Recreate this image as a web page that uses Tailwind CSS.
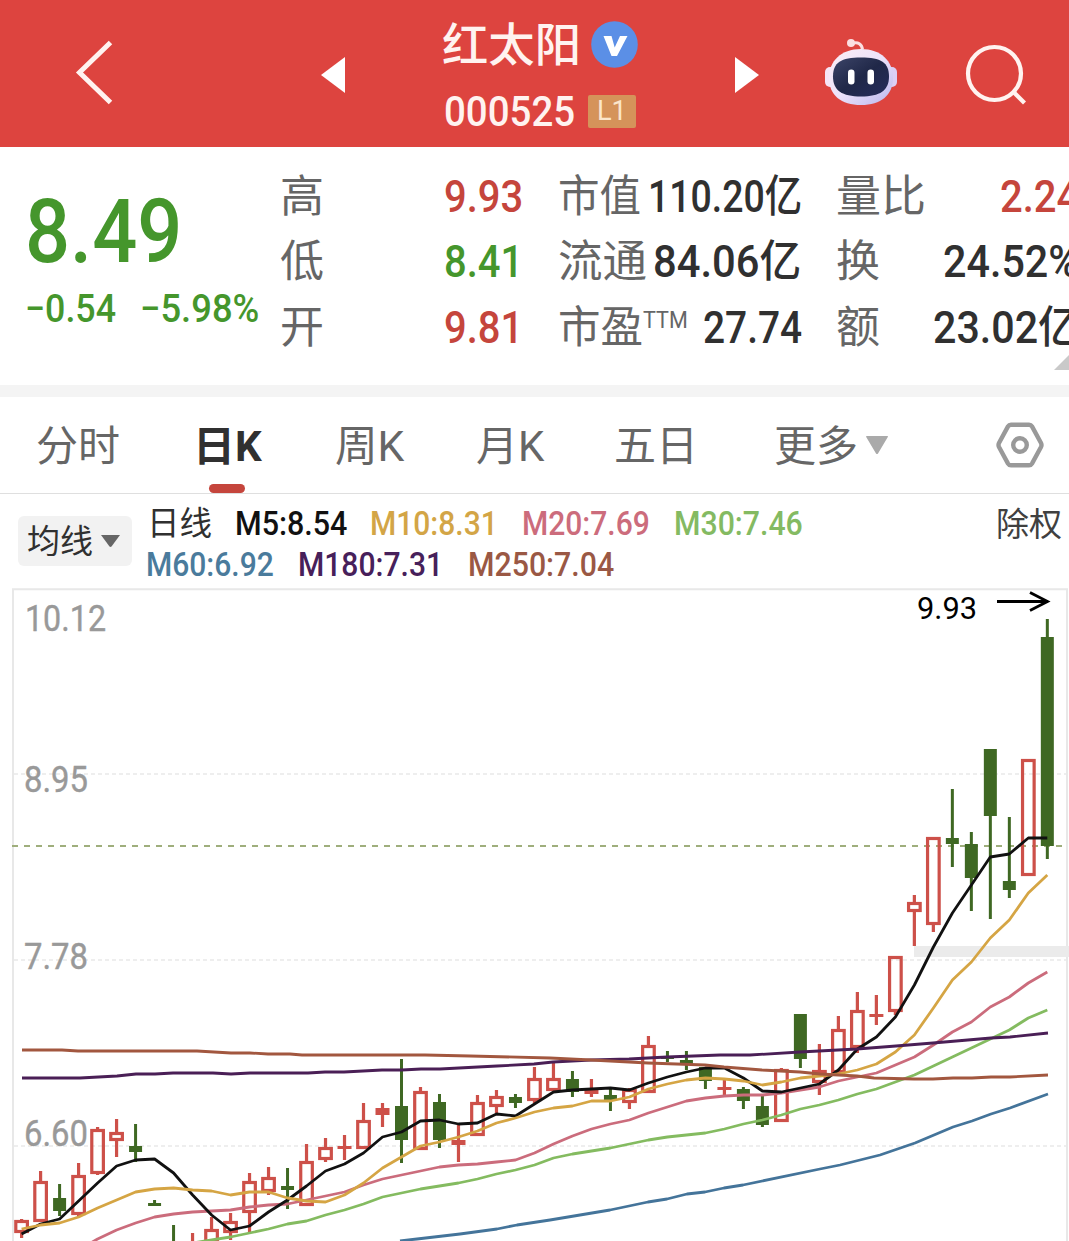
<!DOCTYPE html>
<html lang="zh-CN">
<head>
<meta charset="utf-8">
<title>红太阳 000525</title>
<script src="https://cdn.jsdelivr.net/npm/@tailwindcss/browser@4"></script>
</head>
<body class="w-[1069px] h-[1241px] overflow-hidden bg-white font-['Roboto','Noto_Sans_CJK_SC',sans-serif] text-[#303030] leading-none whitespace-nowrap [&_.fit]:block [&_.fit]:shrink-0 [&_.fit>span]:inline-block [&_.fit>span]:origin-left">

<header class="h-[147px] bg-[#dd443f] flex items-start text-white">
  <svg class="w-[321px] h-[147px] shrink-0" viewBox="0 0 321 147" fill="none" stroke="#fff3f0" stroke-width="5"><path d="M110.500 42.500 79.500 72.500 110.500 102.500"/></svg>
  <svg class="w-[24px] h-[36px] mt-[57px] shrink-0" viewBox="0 0 24 36"><path d="M24 0v36L0 18z" fill="#fff"/></svg>
  <div class="w-[390px] pl-[97px] pt-[20px] shrink-0">
    <div class="flex items-center h-[48px]">
      <span class="fit w-[139px] pt-[2px] text-[46px] font-medium text-[#fff3f0]"><span>红太阳</span></span>
      <svg class="w-[47px] h-[47px] ml-[10px]" viewBox="0 0 47 47"><circle cx="23.500" cy="23.500" r="23.300" fill="#5b8fe6"/><path d="M12.500 15h8l3.200 11.500L29 15h7.500L26 35h-5.500z" fill="#fff"/></svg>
    </div>
    <div class="flex items-center h-[34px] mt-[26px]">
      <span class="fit w-[131px] pt-[2px] ml-[2px] text-[42px] font-medium text-[#fff3f0]"><span>000525</span></span>
      <span class="ml-[13px] w-[48px] h-[33px] rounded-[2px] bg-[#d5935a] flex items-center justify-center text-[28px] text-[#fbe6cb]"><span class="fit w-[30px]"><span>L1</span></span></span>
    </div>
  </div>
  <svg class="w-[24px] h-[36px] mt-[57px] shrink-0" viewBox="0 0 24 36"><path d="M0 0v36L24 18z" fill="#fff"/></svg>
  <svg class="w-[74px] h-[68px] ml-[65px] mt-[38px] shrink-0" viewBox="824 38 74 68">
    <defs>
      <linearGradient id="shell" x1="0" y1="0" x2="1" y2="1"><stop offset="0" stop-color="#fdeef4"/><stop offset=".5" stop-color="#ece2fa"/><stop offset="1" stop-color="#b9b6ee"/></linearGradient>
      <linearGradient id="visor" x1="0" y1="0" x2="1" y2="1"><stop offset="0" stop-color="#3c4468"/><stop offset=".5" stop-color="#202848"/><stop offset="1" stop-color="#252c5c"/></linearGradient>
    </defs>
    <path d="M852 43.500c6-2.500 10 1 10.500 6" fill="none" stroke="#fbdfe2" stroke-width="3"/>
    <circle cx="851" cy="43" r="4" fill="#fbdfe2"/>
    <rect x="825" y="67" width="13" height="20" rx="5" fill="#f6e4f5"/>
    <rect x="884" y="67" width="13" height="20" rx="5" fill="#dccff5"/>
    <path d="M861 49c20 0 32 12 32 29s-12 27-32 27-32-10-32-27 12-29 32-29z" fill="url(#shell)"/>
    <path d="M861 57.500c20 0 28 5 28 19s-9 20-28 20-28-6-28-20 8-19 28-19z" fill="url(#visor)"/>
    <rect x="848" y="69.500" width="6.500" height="15" rx="3.250" fill="#fff"/>
    <rect x="867.500" y="69.500" width="6.500" height="15" rx="3.250" fill="#fff"/>
  </svg>
  <svg class="w-[66px] h-[66px] ml-[64px] mt-[42px] shrink-0" viewBox="962 42 66 66" fill="none" stroke="#fff3f0" stroke-width="4.200"><circle cx="994.500" cy="73.500" r="26.500"/><path d="m1013 91.500 11.500 11.500"/></svg>
</header>

<section class="relative h-[238px] flex overflow-hidden pt-[17px] text-[44px]">
  <div class="w-[280px] pl-[25px] shrink-0 text-[#45962c] font-medium">
    <div class="h-[96px] mt-[19px] flex items-center text-[89px]"><span class="fit w-[157px]"><span>8.49</span></span></div>
    <div class="h-[40px] mt-[10px] flex items-center text-[38.500px]">
      <span class="fit w-[91px]"><span>−0.54</span></span>
      <span class="fit w-[119px] ml-[24px]"><span>−5.98%</span></span>
    </div>
  </div>
  <div class="w-[243px] shrink-0 font-medium">
    <div class="h-[65.500px] flex items-center justify-between"><span class="font-normal text-[#666]">高</span><span class="fit w-[79px] text-[#c5453c]"><span>9.93</span></span></div>
    <div class="h-[65.500px] flex items-center justify-between"><span class="font-normal text-[#666]">低</span><span class="fit w-[79px] text-[#45962c]"><span>8.41</span></span></div>
    <div class="h-[65.500px] flex items-center justify-between"><span class="font-normal text-[#666]">开</span><span class="fit w-[79px] text-[#c5453c]"><span>9.81</span></span></div>
  </div>
  <div class="w-[244px] ml-[35px] shrink-0 font-medium">
    <div class="h-[65.500px] flex items-center justify-between"><span class="fit w-[83px] font-normal text-[#666]"><span>市值</span></span><span class="fit w-[154px]"><span>110.20亿</span></span></div>
    <div class="h-[65.500px] flex items-center justify-between"><span class="fit w-[89px] font-normal text-[#666]"><span>流通</span></span><span class="fit w-[148px] -translate-x-[1px]"><span>84.06亿</span></span></div>
    <div class="h-[65.500px] flex items-center justify-between"><span class="flex font-normal text-[#666]"><span class="fit w-[85px]"><span>市盈</span></span><span class="fit w-[45px] text-[23px] mt-[3px]"><span>TTM</span></span></span><span class="fit w-[99px]"><span>27.74</span></span></div>
  </div>
  <div class="w-[243px] ml-[34px] shrink-0 font-medium">
    <div class="h-[65.500px] flex items-center justify-between"><span class="fit w-[90px] font-normal text-[#666]"><span>量比</span></span><span class="fit w-[79px] text-[#c5453c]"><span>2.24</span></span></div>
    <div class="h-[65.500px] flex items-center justify-between"><span class="font-normal text-[#666]">换</span><span class="fit w-[136px]"><span>24.52%</span></span></div>
    <div class="h-[65.500px] flex items-center justify-between"><span class="font-normal text-[#666]">额</span><span class="fit w-[146px]"><span>23.02亿</span></span></div>
  </div>
  <svg class="absolute right-0 top-[208px] w-[15px] h-[15px]" viewBox="0 0 15 15"><path d="M0 15 15 0v15z" fill="#c9c9c9"/></svg>
</section>

<div class="h-[12px] bg-[#f4f4f4]"></div>

<nav class="relative h-[97px] border-b border-[#dfdfdf] flex items-center text-[42px] text-[#666] [&>.fit]:pt-[4px]">
  <span class="fit w-[84px] ml-[36px]"><span>分时</span></span>
  <span class="fit w-[69px] ml-[73px] font-bold text-[#303030]"><span>日K</span></span>
  <span class="fit w-[69px] ml-[73px]"><span>周K</span></span>
  <span class="fit w-[68px] ml-[72px]"><span>月K</span></span>
  <span class="fit w-[84px] ml-[70px]"><span>五日</span></span>
  <span class="fit w-[84px] ml-[76px]"><span>更多</span></span>
  <svg class="w-[22px] h-[18px] ml-[8px]" viewBox="0 0 22 18"><path d="M.5 0h21c.5 0 .6.500.3 1L12 17.400q-1 1.200-2 0L.2 1Q0 0 .5 0z" fill="#aaa"/></svg>
  <svg class="w-[50px] h-[46px] ml-[107px]" viewBox="0 0 50 46" fill="none" stroke="#999" stroke-width="4.400"><path d="M16 2.700h18q2 0 3 1.700l9 16.600q1 2 0 4l-9 16.600q-1 1.700-3 1.700h-18q-2 0-3-1.700L4 25q-1-2 0-4l9-16.600q1-1.700 3-1.700z"/><circle cx="25" cy="23" r="6.800"/></svg>
  <span class="absolute left-[209px] bottom-0 w-[36px] h-[9px] rounded-full bg-[#c5453c]"></span>
</nav>

<section class="h-[94px] flex text-[34px]">
  <button class="w-[114px] h-[50px] ml-[18px] mt-[22px] rounded-[6px] bg-[#f2f2f2] flex items-center pl-[9px] text-[32.500px] shrink-0"><span class="fit w-[66px] pt-[3px]"><span>均线</span></span>
    <svg class="w-[19px] h-[12px] ml-[8px]" viewBox="0 0 19 12"><path d="M0 0h19l-8.500 11.500q-1 .8-2 0z" fill="#666"/></svg></button>
  <div class="ml-[15px] w-[850px] pt-[8px] shrink-0 font-medium">
    <div class="h-[41px] flex items-center">
      <span class="fit w-[65px] pt-[4px] font-normal text-[32.500px]"><span>日线</span></span>
      <span class="fit w-[112px] ml-[23px] text-[#111]"><span>M5:8.54</span></span>
      <span class="fit w-[128px] ml-[23px] text-[#d3a546]"><span>M10:8.31</span></span>
      <span class="fit w-[128px] ml-[24px] text-[#cc6c7c]"><span>M20:7.69</span></span>
      <span class="fit w-[129px] ml-[24px] text-[#84ba62]"><span>M30:7.46</span></span>
    </div>
    <div class="h-[41px] flex items-center">
      <span class="fit w-[128px] -ml-[1px] text-[#4a7b9c]"><span>M60:6.92</span></span>
      <span class="fit w-[145px] ml-[24px] text-[#47205a]"><span>M180:7.31</span></span>
      <span class="fit w-[146px] ml-[25px] text-[#9a5844]"><span>M250:7.04</span></span>
    </div>
  </div>
  <div class="h-[41px] mt-[10px] -ml-[1px] flex items-center text-[32.500px]"><span class="fit w-[66px] pt-[1px] text-[#404040]"><span>除权</span></span></div>
</section>

<svg class="block w-[1069px] h-[653px]" viewBox="0 588 1069 653" fill="none">
  <path d="M13 1245V589.200H1067V1245" stroke="#e8e8e8" stroke-width="2"/>
  <path d="M14 774H1066M14 960H1066M14 1146H1066" stroke="#e9e9e9" stroke-width="1.500" stroke-dasharray="4 3"/>
  <rect x="914" y="946" width="155" height="11" fill="#ebebeb"/>
  <path d="M12 846H1066" stroke="#9fae7c" stroke-width="2" stroke-dasharray="6 6"/>
  <g fill="#999" stroke="#999" stroke-width=".4" font-family="Roboto, sans-serif" font-size="36">
    <text x="25" y="631" textLength="81" lengthAdjust="spacingAndGlyphs">10.12</text>
    <text x="24" y="791.500" textLength="64" lengthAdjust="spacingAndGlyphs">8.95</text>
    <text x="24" y="968.500" textLength="64" lengthAdjust="spacingAndGlyphs">7.78</text>
    <text x="24" y="1145.500" textLength="64" lengthAdjust="spacingAndGlyphs">6.60</text>
  </g>
  <g id="candles"></g>
  <g id="averages" stroke-width="2.800" stroke-linejoin="round"></g>
  <text x="917" y="619" textLength="60" lengthAdjust="spacingAndGlyphs" fill="#000" font-family="Roboto, sans-serif" font-size="32">9.93</text>
  <path d="M997 601.500H1047M1030 592.500 1047.500 601.500 1030 610.500" stroke="#000" stroke-width="2.800"/>
</svg>

<script>
const squeeze = () => document.querySelectorAll('.fit').forEach(box => {
  const t = box.firstElementChild;
  if (t.offsetWidth) t.style.transform = 'scaleX(' + box.clientWidth / t.offsetWidth + ')';
});
const watcher = new ResizeObserver(squeeze);
document.querySelectorAll('.fit, .fit > span').forEach(el => watcher.observe(el));
window.addEventListener('load', squeeze);

// One row per day: direction, high, body top, body bottom, low.
const days = [
['r',1219,1220,1233,1238],['r',1171,1181,1222,1222],['g',1184,1198,1211,1216],['r',1163,1175,1215,1217],['r',1127,1129,1174,1175],
['r',1119,1132,1141,1157],['g',1124,1146,1152,1162],['g',1200,1203,1206,1206],['g',1225,1245,1260,1260],['r',1233,1242,1260,1260],
['r',1217,1229,1243,1243],['r',1213,1221,1233,1240],['r',1173,1181,1213,1232],['r',1167,1177,1192,1195],['g',1168,1186,1190,1209],
['r',1144,1161,1206,1206],['r',1138,1147,1160,1162],['r',1135,1146,1149,1160],['r',1103,1120,1149,1149],['r',1103,1108,1115,1127],
['g',1059,1106,1140,1163],['r',1087,1091,1150,1150],['g',1094,1102,1140,1148],['r',1124,1140,1145,1162],['r',1095,1102,1136,1136],
['r',1090,1096,1107,1113],['g',1094,1097,1103,1108],['r',1067,1078,1101,1103],['r',1063,1078,1091,1091],['g',1071,1079,1092,1097],
['r',1079,1089,1094,1097],['g',1089,1095,1100,1111],['r',1088,1089,1103,1109],['r',1036,1045,1093,1093],['g',1051,1056,1059,1062],
['g',1051,1060,1065,1070],['g',1067,1067,1081,1089],['r',1080,1087,1090,1096],['g',1087,1089,1101,1109],['g',1095,1106,1125,1127],
['r',1068,1069,1122,1122],['g',1014,1014,1059,1068],['r',1044,1070,1083,1095],['r',1016,1029,1073,1073],['r',992,1010,1048,1053],
['r',995,1014,1017,1025],['r',956,956,1012,1015],['r',895,902,912,946],['r',837,837,925,932],['g',789,838,844,867],
['g',832,844,878,911],['g',749,749,816,919],['g',817,881,890,898],['r',759,759,876,876],['g',619,637,846,859]];
const x = i => 21.6 + 18.995 * i;
let out = '';
days.forEach(([d, hi, a, b, lo], i) => {
  const c = x(i);
  if (d === 'g') {
    out += `<rect x="${c-1.5}" y="${hi}" width="3" height="${lo-hi}" fill="#3f6823"/><rect x="${c-6.5}" y="${a}" width="13" height="${b-a}" fill="#3f6823"/>`;
  } else {
    out += `<path d="M${c} ${hi}V${a+1}M${c} ${b-1}V${lo}" stroke="#cd5049" stroke-width="3.2"/>`;
    out += b - a < 7.5
      ? `<rect x="${c-7}" y="${a}" width="14" height="${b-a}" fill="#cd5049"/>`
      : `<rect x="${c-5.8}" y="${a+1.5}" width="11.6" height="${b-a-3}" stroke="#cd5049" stroke-width="3.2"/>`;
  }
});
document.getElementById('candles').innerHTML = out;

const daily = (from, ys) => ys.map((y, i) => x(from + i).toFixed(1) + ',' + y).join(' ');
const lines = [
['#44749a','400,1241 417,1239 460,1234 497,1229 517,1225 550,1220 610,1210 648,1202 667,1199 687,1194 705,1192 724,1188 743,1185 820,1169 840,1165 880,1155 915,1143 953,1127 972,1121 991,1114 1010,1108 1048,1094'],
['#84bb60',daily(9,[1243,1240,1237,1233,1229,1224,1221,1215,1210,1204,1197,1193,1189,1186,1183,1179,1174,1170,1165,1158,1154,1151,1148,1144,1140,1137,1135,1133,1129,1124,1120,1115,1109,1105,1100,1094,1089,1082,1075,1066,1057,1048,1039,1030,1018,1010])],
['#cb6c7c',daily(3,[1250,1239,1230,1223,1217,1214,1212,1211,1210,1207,1205,1204,1200,1196,1192,1185,1179,1175,1171,1167,1165,1164,1162,1160,1153,1144,1136,1129,1124,1120,1113,1107,1101,1098,1096,1095,1095,1093,1090,1087,1081,1077,1073,1065,1057,1045,1032,1022,1007,997,983,972])],
['#111',daily(0,[1234,1224,1219,1201,1183,1166,1160,1159,1173,1195,1215,1230,1226,1212,1200,1186,1171,1164,1153,1137,1132,1121,1120,1124,1123,1114,1116,1104,1092,1090,1089,1088,1090,1083,1077,1072,1068,1068,1078,1091,1092,1088,1084,1070,1049,1037,1017,985,947,913,885,857,854,838,838])],
['#d5a544',daily(0,[1229,1225,1223,1217,1208,1200,1192,1189,1188,1190,1191,1195,1192,1192,1198,1201,1202,1195,1183,1168,1157,1146,1142,1137,1131,1123,1118,1112,1108,1106,1101,1101,1097,1089,1084,1080,1078,1079,1081,1085,1082,1078,1076,1074,1070,1064,1052,1035,1008,980,962,938,920,893,875])],
['#4a1f56','22,1078 80,1078 117,1076 136,1074 155,1074 173,1073 213,1073 231,1074 250,1073 308,1073 325,1072 344,1072 382,1070 402,1070 421,1069 440,1069 497,1066 534,1064 553,1062 591,1060 629,1059 667,1057 720,1055 750,1055 800,1052 857,1049 896,1046 933,1043 991,1038 1010,1037 1048,1033'],
['#a2573f','22,1050 62,1050 78,1051 197,1051 231,1053 250,1053 268,1054 290,1054 302,1055 425,1055 470,1056 550,1058 591,1060 648,1063 705,1065 724,1067 762,1070 800,1072 820,1074 857,1076 874,1078 914,1079 933,1079 953,1078 972,1078 991,1077 1010,1077 1048,1075']];
document.getElementById('averages').innerHTML = lines.map(([c, p]) => `<polyline points="${p}" stroke="${c}"/>`).join('');
</script>
</body>
</html>
